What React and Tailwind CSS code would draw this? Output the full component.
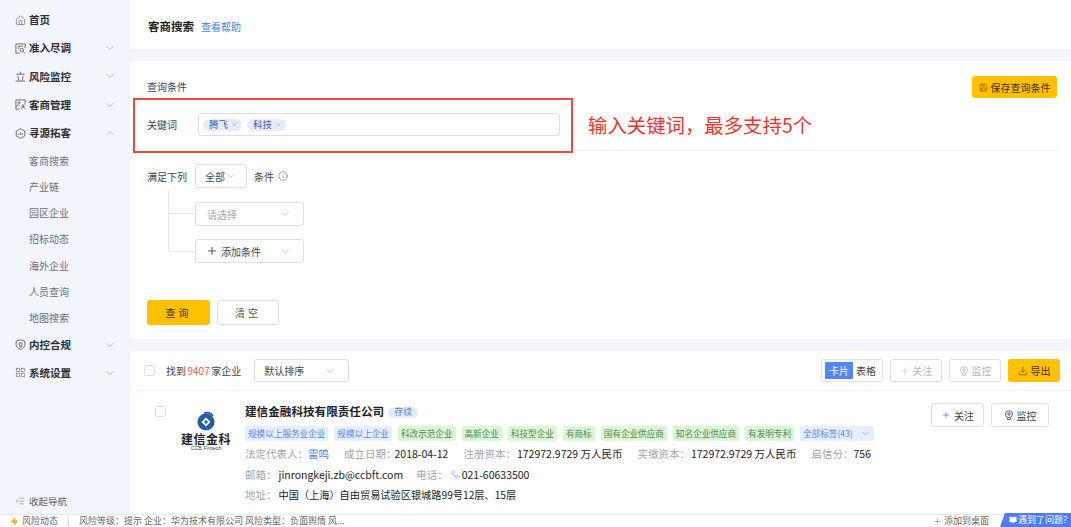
import { ChevronDown, ChevronUp, Plus, Info, Save, Download, Phone, Zap, BookOpen, X, LayoutGrid, House, IndentDecrease } from "lucide-react";

const FONT = { fontFamily: '"Noto Sans CJK SC", "Noto Sans", sans-serif' };

const subMenu = ["客商搜索", "产业链", "园区企业", "招标动态", "海外企业", "人员查询", "地图搜索"];

const blueTags = ["规模以上服务业企业", "规模以上企业"];
const greenTags = ["科改示范企业", "高新企业", "科技型企业", "有商标", "国有企业供应商", "知名企业供应商", "有发明专利"];

// sidebar icons that lucide has no close match for
const Svg = ({ className, size = 11, children }) => (
  <svg width={size} height={size} viewBox="0 0 12 12" fill="none" stroke="currentColor" strokeWidth="0.9" className={className}>
    {children}
  </svg>
);

const DueIcon = (p) => (
  <Svg {...p}>
    <path d="M5 11H1V1h10v4.5M3 3.5h6M3 5.5h2" />
    <circle cx="7.5" cy="7.8" r="1.9" />
    <path d="m9 9.3 1.8 1.7" />
  </Svg>
);
const RiskIcon = (p) => (
  <Svg {...p}>
    <path d="M6 .8v2.4M1.5 3.4h9M3 5.2l1.2 5.3M9 5.2l-1.2 5.3M.8 11h10.4" />
  </Svg>
);
const ClientIcon = (p) => (
  <Svg {...p}>
    <path d="M5 11H1V1h10v5M1 8.5l2.5-2.5L5 7.5" />
    <circle cx="4.5" cy="4" r="1" />
    <circle cx="8.8" cy="7.6" r="1.2" />
    <path d="M6.8 11c.2-1.3 1-1.9 2-1.9s1.800.6 2 1.900" />
  </Svg>
);
const SourceIcon = (p) => (
  <Svg {...p}>
    <path d="M6 .7 10.700 3.300v5.400L6 11.300 1.300 8.700V3.300Z" />
    <path d="M4 7.800V6.500M6 7.800V4.500M8 7.800V5.500" />
  </Svg>
);
const ShieldIcon = (p) => (
  <Svg {...p}>
    <path d="M6 .7 10.800 2.300v4C10.800 8.800 8.500 10.500 6 11.400 3.500 10.500 1.200 8.800 1.200 6.300v-4Z" />
    <circle cx="6" cy="5.600" r="1.800" />
    <path d="M4.200 8.500h3.600" />
  </Svg>
);
const MonitorIcon = ({ className }) => (
  <svg width="10" height="10" viewBox="0 0 12 12" fill="none" stroke="currentColor" strokeWidth="1" className={className}>
    <circle cx="6" cy="5" r="4.200" />
    <circle cx="6" cy="4.800" r="1.500" />
    <path d="M4 9.500v1.700h4V9.500" />
  </svg>
);

function MenuItem({ icon: Icon, label, open, noArrow }) {
  return (
    <div className="flex h-[28.3px] items-center pl-[15px] pr-[14px] text-[10.5px] font-bold text-[#2c2e36]">
      <Icon size={11} strokeWidth={1.25} className="mr-[3px] shrink-0 text-[#555]" />
      <span className="flex-1">{label}</span>
      {!noArrow && (open ? <ChevronUp size={12} strokeWidth={1} className="text-[#777]" /> : <ChevronDown size={12} strokeWidth={1} className="text-[#777]" />)}
    </div>
  );
}

function Sidebar() {
  return (
    <aside className="flex w-[130px] shrink-0 flex-col bg-[#f3f5fc] pt-[6px]">
      <div className="h-[28px]">
        <MenuItem icon={House} label="首页" noArrow />
      </div>
      <MenuItem icon={DueIcon} label="准入尽调" />
      <MenuItem icon={RiskIcon} label="风险监控" />
      <MenuItem icon={ClientIcon} label="客商管理" />
      <MenuItem icon={SourceIcon} label="寻源拓客" open />
      {subMenu.map((s) => (
        <div key={s} className="flex h-[26.2px] items-center pl-[29px] text-[10px] text-[#6b6e78]">{s}</div>
      ))}
      <MenuItem icon={ShieldIcon} label="内控合规" />
      <MenuItem icon={LayoutGrid} label="系统设置" />
      <div className="mt-auto mb-[6px] flex items-center pl-[15px] text-[9.500px] text-[#666]">
        <IndentDecrease size={10} strokeWidth={1.25} className="mr-[4px]" />
        收起导航
      </div>
    </aside>
  );
}

function SelectBox({ label, className, muted, children }) {
  return (
    <div className={`flex items-center justify-between rounded-[3px] border border-[#dcdee8] bg-white text-[10px] ${muted ? "text-[#a6a8b2]" : "text-[#444]"} ${className}`}>
      {children}
      <span className="flex-1">{label}</span>
      <ChevronDown size={12} strokeWidth={1} className="text-[#888]" />
    </div>
  );
}

function Keyword({ text }) {
  return (
    <span className="flex h-[12px] items-center rounded-full bg-[#e5ecfd] pl-[6px] pr-[4px] text-[9.500px] text-[#3f5fc0]">
      {text}
      <X size={7} strokeWidth={1.25} className="ml-[3px] text-[#888]" />
    </span>
  );
}

function SearchPanel() {
  return (
    <section className="relative mt-[12px] h-[278px] shrink-0 rounded-[4px] bg-white pl-[17px] pr-[14px]">
      <div className="flex h-[37px] items-end justify-between">
        <span className="mb-[4px] text-[10px] text-[#444]">查询条件</span>
        <button className="flex h-[22px] w-[85px] items-center justify-center rounded-[3px] bg-[#ffc000] text-[10px] text-[#3b3000]">
          <Save size={9} strokeWidth={1.25} className="mr-[3px]" />
          保存查询条件
        </button>
      </div>
      <div className="mt-[15px] flex items-center text-[10px] text-[#444]">
        <span className="w-[51px]">关键词</span>
        <div className="flex h-[23px] w-[362px] items-center gap-[5px] rounded-[3px] border border-[#dcdee8] pl-[4px]">
          <Keyword text="腾飞" />
          <Keyword text="科技" />
        </div>
      </div>
      <div className="mt-[14px] ml-[425px] h-px bg-[#f0f1f5]" />
      <div className="mt-[13px] flex items-center text-[10px] text-[#444]">
        <span className="w-[48px]">满足下列</span>
        <SelectBox label="全部" className="h-[24px] w-[52px] px-[9px]" />
        <span className="ml-[7px]">条件</span>
        <Info size={10} strokeWidth={1.25} className="ml-[4px]" />
      </div>
      <div className="relative ml-[48px] mt-[14px] flex flex-col gap-[13px]">
        <div className="absolute -left-[27px] -top-[11px] h-[61px] w-[27px] rounded-bl-[2px] border-b border-l border-[#e4e6ee]" />
        <div className="absolute -left-[27px] top-[11px] h-px w-[27px] bg-[#e4e6ee]" />
        <SelectBox label="请选择" muted className="h-[24px] w-[109px] pl-[11px] pr-[12px]" />
        <SelectBox label="添加条件" className="h-[24px] w-[109px] pl-[10px] pr-[12px]">
          <Plus size={12} strokeWidth={1.5} className="mr-[3px] text-[#222]" />
        </SelectBox>
      </div>
      <div className="mt-[37px] flex gap-[7px] text-[10px]">
        <button className="h-[25px] w-[63px] rounded-[3px] bg-[#ffc000] tracking-[3px] text-[#3b3000]">查询</button>
        <button className="h-[25px] w-[62px] rounded-[3px] border border-[#dcdee8] tracking-[3px] text-[#555]">清空</button>
      </div>
      {/* red annotation drawn on top of the form */}
      <div className="absolute left-[3px] top-[37px] h-[55px] w-[440px] border-2 border-[#f5483b]" />
      <div className="absolute left-[458px] top-[50px] text-[19.400px] leading-[28px] text-[#f5332a]">输入关键词，最多支持5个</div>
    </section>
  );
}

function GhostButton({ icon: Icon, label, className, disabled }) {
  return (
    <button className={`flex items-center justify-center rounded-[3px] border border-[#dcdee8] bg-white text-[10px] ${disabled ? "text-[#b5b7c0]" : "text-[#444]"} ${className}`}>
      <Icon size={10} strokeWidth={1.25} className="mr-[3px]" />
      {label}
    </button>
  );
}

function CcbLogo() {
  return (
    <div className="flex w-[62px] flex-col items-center">
      <svg width="20" height="20" viewBox="0 0 20 20">
        <circle cx="10" cy="11" r="8.500" fill="#1d5fa8" />
        <path d="M10 6.500 14.500 11 10 15.500 5.500 11Z" fill="#fff" />
        <path d="M10 9 12 11 10 13 8 11Z" fill="#1d5fa8" />
        <path d="M8 2.500C11 .5 15 2 17 5" fill="none" stroke="#1d5fa8" strokeWidth="1.800" />
      </svg>
      <span className="mt-[1px] text-[12px] font-bold leading-[13px] tracking-[0.5px] text-[#222]">建信金科</span>
      <span className="text-[5.500px] leading-[7px] text-[#444]" style={{ fontFamily: '"Liberation Sans", sans-serif' }}>CCB Fintech</span>
    </div>
  );
}

function Field({ label, children }) {
  return (
    <span className="flex items-center">
      <span className="text-[#a2a4ae]">{label}</span>
      {children}
    </span>
  );
}

function CompanyCard() {
  return (
    <div className="flex pl-[25px] pt-[12px]">
      <span className="mt-[3px] h-[11px] w-[11px] shrink-0 rounded-[2px] border border-[#dcdee8]" />
      <div className="ml-[9px] mt-[8px]">
        <CcbLogo />
      </div>
      <div className="ml-[8px] flex-1 text-[10.500px] text-[#222]">
        <div className="flex h-[18px] items-center">
          <span className="text-[11.600px] font-bold text-[#1f2026]">建信金融科技有限责任公司</span>
          <span className="ml-[4px] flex h-[11px] items-center rounded-full bg-[#e5ecfd] px-[6px] text-[9px] text-[#5a7fe0]">存续</span>
        </div>
        <div className="mt-[5px] flex items-center gap-[6px] text-[8.600px]">
          {blueTags.map((t) => (
            <span key={t} className="flex h-[15px] items-center rounded-[2px] bg-[#e6eeff] px-[3px] text-[#5a85f5]">{t}</span>
          ))}
          {greenTags.map((t) => (
            <span key={t} className="flex h-[15px] items-center rounded-[2px] bg-[#dcf5d3] px-[3px] text-[#4b8a58]">{t}</span>
          ))}
          <span className="flex h-[15px] w-[74px] items-center justify-between rounded-[2px] bg-[#e6eeff] pl-[3px] pr-[3px] text-[#5a85f5]">
            全部标签(43)
            <ChevronDown size={11} strokeWidth={1.25} />
          </span>
        </div>
        <div className="mt-[3px] flex h-[20px] items-center gap-[15px]">
          <Field label="法定代表人："><span className="text-[#4d7cfe]">雷鸣</span></Field>
          <Field label="成立日期："><span className="-ml-[2px]">2018-04-12</span></Field>
          <Field label="注册资本："><span className="ml-[1px]">172972.9729 万人民币</span></Field>
          <Field label="实缴资本："><span className="ml-[1px]">172972.9729 万人民币</span></Field>
          <Field label="启信分："><span>756</span></Field>
        </div>
        <div className="flex h-[21px] items-center gap-[13px]">
          <Field label="邮箱："><span className="ml-[2px]">jinrongkeji.zb@ccbft.com</span></Field>
          <Field label="电话：">
            <Phone size={9} strokeWidth={1.25} className="ml-[3px] mr-[2px] text-[#4d7cfe]" />
            <span>021-60633500</span>
          </Field>
        </div>
        <div className="flex h-[20px] items-center">
          <Field label="地址："><span className="ml-[2px] text-[10.200px]">中国（上海）自由贸易试验区银城路99号12层、15层</span></Field>
        </div>
      </div>
      <div className="absolute right-[22px] top-[52px] flex gap-[7px]">
        <GhostButton icon={Plus} label="关注" className="h-[24px] w-[53px]" />
        <GhostButton icon={MonitorIcon} label="监控" className="h-[24px] w-[58px]" />
      </div>
    </div>
  );
}

function ResultPanel() {
  return (
    <section className="relative mt-[12px] flex-1 overflow-hidden rounded-t-[4px] bg-white">
      <div className="flex h-[40px] items-center border-b border-[#f5f6f9] pl-[14px] pr-[11px] text-[10px] text-[#444]">
        <span className="h-[11px] w-[11px] rounded-[2px] border border-[#dcdee8]" />
        <span className="ml-[11px] flex gap-[1.500px]">找到<span className="text-[#f5554a]">9407</span>家企业</span>
        <SelectBox label="默认排序" className="ml-[13px] h-[23px] w-[95px] pl-[9px] pr-[12px]" />
        <div className="ml-auto flex h-[23px] w-[62px] items-center rounded-[3px] border border-[#dcdee8] px-[3px]">
          <span className="flex h-[17px] w-[28px] items-center justify-center bg-[#5585fb] text-white">卡片</span>
          <span className="flex-1 text-center">表格</span>
        </div>
        <GhostButton icon={Plus} label="关注" disabled className="ml-[7px] h-[23px] w-[52px]" />
        <GhostButton icon={MonitorIcon} label="监控" disabled className="ml-[7px] h-[23px] w-[52px]" />
        <button className="ml-[7px] flex h-[23px] w-[52px] items-center justify-center rounded-[3px] bg-[#ffc000] text-[#3b3000]">
          <Download size={10} strokeWidth={1.25} className="mr-[3px]" />
          导出
        </button>
      </div>
      <CompanyCard />
    </section>
  );
}

function BottomBar() {
  return (
    <footer className="relative flex h-[13px] shrink-0 items-center border-t border-[#e8e9ef] bg-white pl-[10px] text-[9px] text-[#666]">
      <Zap size={9} strokeWidth={1.25} className="mr-[3px] fill-[#f7a823] text-[#f7a823]" />
      <span>风险动态</span>
      <span className="mx-[10px] h-[9px] w-px bg-[#ddd]" />
      <span>风险等级：提示 企业：华为技术有限公司 风险类型：负面舆情 风...</span>
      <span className="ml-auto mr-[82px] flex items-center">
        <Plus size={9} strokeWidth={1.25} className="mr-[2px]" />
        添加到桌面
      </span>
      <span className="absolute -top-[2px] right-0 flex h-[14px] w-[71px] items-center whitespace-nowrap bg-[#4d7cfe] pl-[9px] text-[9px] leading-[14px] text-white [clip-path:polygon(5px_0,100%_0,100%_100%,0_100%)]">
        <BookOpen size={8} strokeWidth={1.25} className="mr-[1px] shrink-0 fill-white" />
        遇到了问题?
      </span>
    </footer>
  );
}

export default function App() {
  return (
    <div className="flex h-screen w-full flex-col overflow-hidden bg-[#f5f6fb]" style={FONT}>
      <div className="flex min-h-0 flex-1">
        <Sidebar />
        <main className="flex min-w-0 flex-1 flex-col">
          <header className="flex h-[49px] shrink-0 items-center bg-white pl-[18px] pt-[4px]">
            <span className="text-[11.500px] font-bold text-[#222]">客商搜索</span>
            <span className="ml-[7px] text-[10px] text-[#4d7cfe]">查看帮助</span>
          </header>
          <SearchPanel />
          <ResultPanel />
        </main>
      </div>
      <BottomBar />
    </div>
  );
}
